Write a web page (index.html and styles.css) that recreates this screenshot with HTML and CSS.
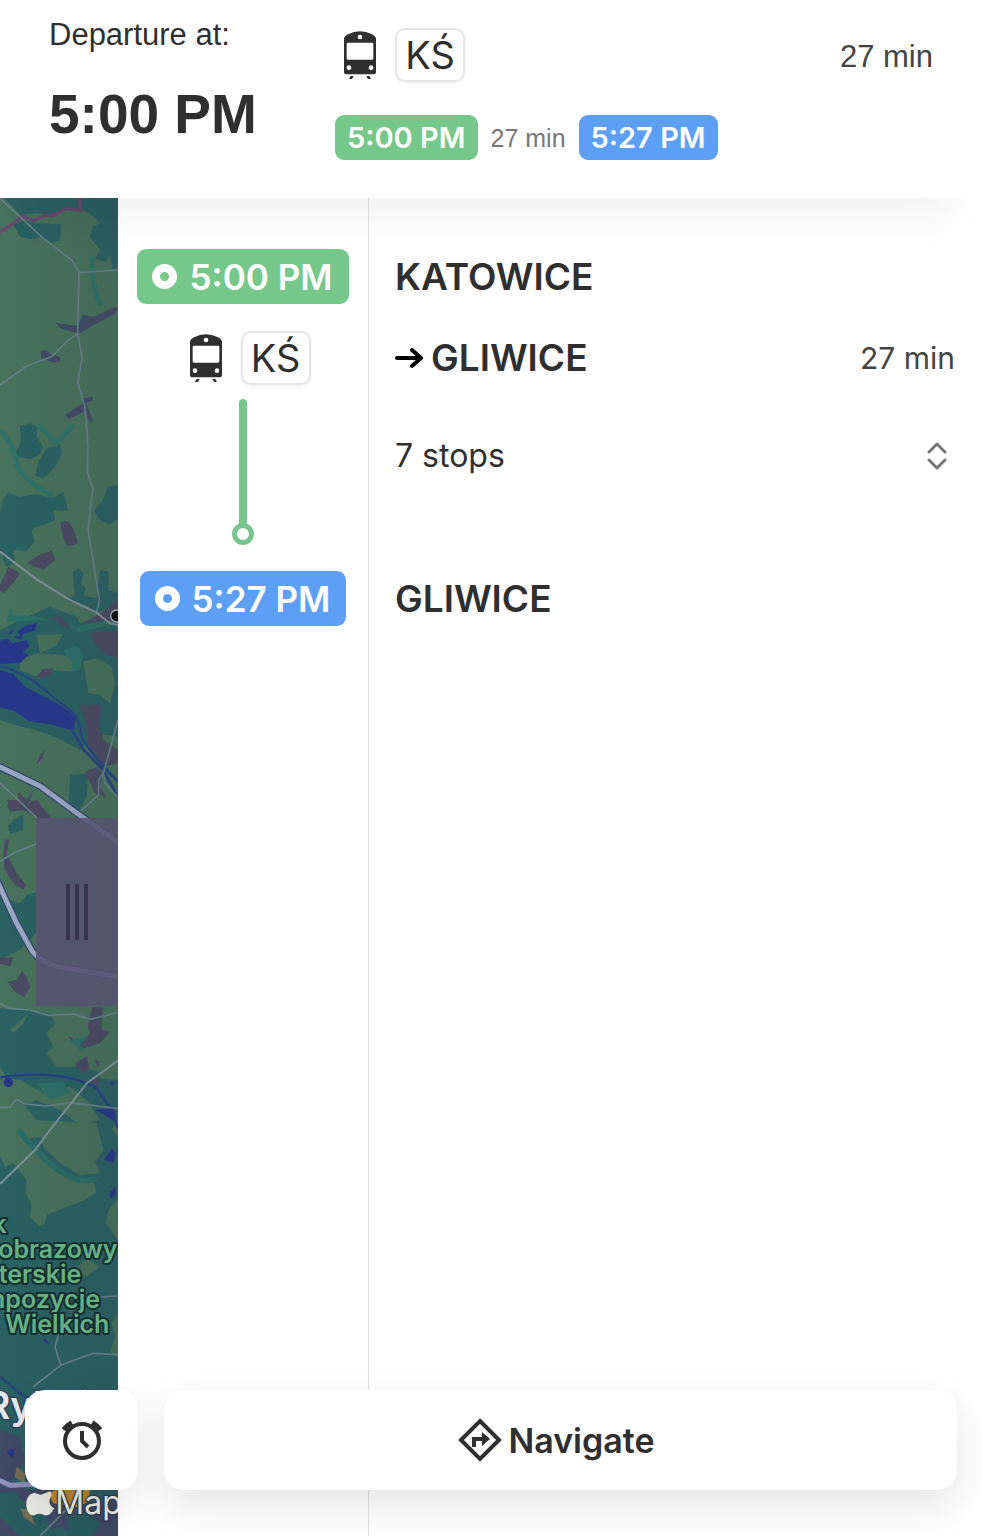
FILE: index.html
```html
<!DOCTYPE html>
<html lang="en">
<head>
    <meta charset="utf-8">
    <meta name="viewport" content="width=device-width, initial-scale=1">
    <title>Katowice - Gliwice</title>
    <link rel="stylesheet" href="styles.css">
</head>
<body>
    <!-- shared icons -->
    <svg class="sprite" aria-hidden="true">
        <symbol id="train" viewBox="0 0 96 144">
            <path fill-rule="evenodd" d="M0 22Q2 14 12 10Q48 -9 84 10Q94 14 96 22V122Q96 130 88 130H8Q0 130 0 122ZM12 35Q8 35 8 39V82Q8 86 12 86H84Q88 86 88 82V39Q88 35 84 35ZM48 11A7 7 0 1 0 48 25A7 7 0 1 0 48 11ZM15 103A7 7 0 1 0 15 117A7 7 0 1 0 15 103ZM81 103A7 7 0 1 0 81 117A7 7 0 1 0 81 103Z"/>
            <path d="M20 135H29L24 144H15ZM67 135H76L81 144H72Z"/>
        </symbol>
    </svg>

    <header class="header">
        <div class="departure">
            <div class="departure-label">Departure at:</div>
            <div class="departure-time">5:00 PM</div>
        </div>
        <div class="route">
            <div class="vehicle">
                <svg class="train"><use href="#train"/></svg>
                <span class="line-badge">KŚ</span>
            </div>
            <div class="route-times">
                <span class="pill green">5:00 PM</span>
                <span class="route-min">27 min</span>
                <span class="pill blue">5:27 PM</span>
            </div>
        </div>
        <div class="total">27 min</div>
    </header>

    <main class="content">
        <div class="map">
            <svg class="map-canvas" viewBox="0 594 354 4014" preserveAspectRatio="xMinYMin slice">
                <defs>
                    <linearGradient id="shade" x1="0" x2="1" y1="0" y2="0">
                        <stop offset="0" stop-color="#2b3340" stop-opacity="0"/>
                        <stop offset="1" stop-color="#2b3340" stop-opacity=".14"/>
                    </linearGradient>
                </defs>
                <rect y="594" width="354" height="4014" fill="#47725b"/>

                <!-- north -->
                <g transform="translate(0 570)">
                    <g fill="#2a6163">
                        <path d="M10 24H354V232L338 238L330 195L318 215L285 208L300 180L270 140L278 110L300 100L270 70L240 60L200 50L150 75L110 70L60 75L40 50Z"/>
                        <path d="M40 105L70 90L110 100L184 103L180 150L155 160L125 140L95 148L60 140Z"/>
                        <path d="M60 708L90 700L112 712L110 740L130 770L118 795L90 808L55 802L48 785L62 755Z"/>
                        <path d="M140 775L180 762L186 790L165 830L130 866L106 855L115 815Z"/>
                        <path d="M8 930L24 908L60 920L110 912L160 925L190 905L205 962L160 960L165 990L130 1005L60 1025H0V968Z"/>
                        <path d="M354 885L325 890L305 935L282 962L300 990L330 1005L354 985Z"/>
                    </g>
                    <g fill="none" stroke="#2f7268" stroke-width="14">
                        <path d="M0 722Q40 760 55 835Q90 890 160 915"/>
                        <path d="M115 705L170 760L220 705"/>
                        <path d="M276 200Q275 290 302 345"/>
                    </g>
                    <g fill="#414b66">
                        <path d="M168 398L232 408L250 374L280 380L345 352L354 355L345 372L290 400L240 430L215 425L180 414Z"/>
                        <path d="M122 482L140 480L150 492L178 500L182 514L160 518L124 504Z"/>
                        <path d="M196 674L248 640L252 625L278 620L278 632L258 640L280 694L270 698L255 664L205 688Z"/>
                        <path d="M180 998L200 994L218 1020L232 1060L200 1068L190 1040Z"/>
                    </g>
                    <path d="M0 126L40 100L68 78L100 92L134 76L160 76L200 54L240 62V24" fill="none" stroke="#69476f" stroke-width="10"/>
                </g>

                <!-- lakes -->
                <g transform="translate(0 1560)">
                    <g fill="#2a6163">
                        <path d="M0 0H115L95 35L105 65L80 92L40 90L45 125L20 140L0 95Z"/>
                        <path d="M218 155L235 145L250 160L245 195L258 205L250 228L290 235L300 150L325 155V210L354 220V250L290 280L240 270L200 240L225 225Z"/>
                        <path d="M0 330L60 300L150 260L230 290L354 310V650L290 640L240 690L120 640L0 600Z"/>
                        <path d="M210 765L265 760L260 830L240 870H205Z"/>
                        <path d="M40 900L70 882V930H24Z"/>
                    </g>
                    <g fill="#2c7068">
                        <path d="M30 262L40 285L110 290L230 320L354 290V310L240 335L150 300L20 305Z"/>
                        <path d="M190 390L230 376L250 400L240 450L215 455Z"/>
                    </g>
                    <g fill="#47725b">
                        <path d="M60 420L110 400L190 405L218 425L215 455L150 450L110 470L60 450Z"/>
                        <path d="M110 345L188 342L170 375L120 400Z"/>
                        <path d="M250 425L290 415L335 440L345 490L330 550L300 525L265 520Z"/>
                        <path d="M0 610Q120 620 240 690L262 750L210 765L205 868L130 840L0 720Z"/>
                        <path d="M205 245L260 255L290 290L240 310Z"/>
                    </g>
                    <g fill="#4a4b63">
                        <path d="M182 10L205 5L222 30L234 68L208 78L195 50Z"/>
                        <path d="M80 130L110 108L155 92L165 120L130 150Z"/>
                        <path d="M0 195L25 140L60 160L35 195L10 220L0 210Z"/>
                        <path d="M155 292L185 290L215 328L190 318Z"/>
                        <path d="M250 310L320 268L354 235V300Z"/>
                        <path d="M272 338L354 332V415L320 405L290 380Z"/>
                        <path d="M108 470L130 446L160 444L150 465L125 475Z"/>
                        <path d="M238 556L306 555L298 610L310 660L354 690V730L310 740L265 690L258 610Z"/>
                        <path d="M108 732L122 702L134 692L128 715Z"/>
                        <path d="M255 755L290 742L308 760L300 800L320 835L285 820Z"/>
                        <path d="M20 855L50 845L58 815L78 840L100 810L85 850L110 840L155 895L120 900L70 870L30 875Z"/>
                    </g>
                    <g fill="#26378b">
                        <path d="M0 362L25 355L35 370L80 360L88 380L68 395L85 405L60 430L0 432Z"/>
                        <path d="M52 335L75 318L112 308L104 332L62 345ZM24 340L40 328L36 342ZM40 352L70 345L62 358Z"/>
                        <path d="M0 450L40 462L75 500L130 528L190 560L228 590L220 632L150 612L90 605L40 572L0 562Z"/>
                    </g>
                    <g fill="none">
                        <path d="M0 436Q60 455 110 490Q170 540 215 575Q240 600 245 650Q270 700 354 785" stroke="#22577b" stroke-width="9"/>
                        <path d="M0 436Q60 455 110 490Q170 540 215 575Q240 600 245 650Q270 700 354 785" stroke="#2b3f86" stroke-width="4"/>
                        <path d="M218 632L250 688L310 750L354 832" stroke="#254480" stroke-width="8"/>
                    </g>
                </g>

                <!-- around the handle -->
                <g transform="translate(0 2400)">
                    <g fill="#2a6163">
                        <path d="M24 75L70 58L66 90L30 104Z"/>
                        <path d="M0 290L60 310L80 285L108 276V400L60 450L0 480Z"/>
                        <path d="M0 625L70 630L150 640L172 665L140 700L160 740L140 760L170 800L240 800L354 830V950L320 1020H170L110 960L60 900L0 800Z"/>
                    </g>
                    <g fill="#47725b">
                        <path d="M150 640L260 625L262 720L200 740L145 715L165 670Z"/>
                        <path d="M28 690L85 640L70 670L40 698Z"/>
                        <path d="M0 835L60 840L130 880L210 860L260 900L300 960L240 975L180 930L110 900L50 920L0 900Z"/>
                        <path d="M290 780L354 750V840L300 835Z"/>
                    </g>
                    <g fill="#2c7068">
                        <path d="M210 720L280 705L300 690L285 735L240 750Z"/>
                        <path d="M110 850L190 845L210 880L150 900Z"/>
                    </g>
                    <g fill="#4a4b63">
                        <path d="M20 0H70L60 30L30 25ZM90 0L150 50L120 55L95 30Z"/>
                        <path d="M14 120L28 118L20 160L50 220L78 255L70 268L45 255L14 210L10 170Z"/>
                        <path d="M22 545L50 540L66 514L78 530L92 560L72 592L45 575Z"/>
                        <path d="M276 622H308L304 690L330 695L300 730L250 745L240 735L270 700L264 680Z"/>
                        <path d="M226 790L260 768L268 800L255 818L232 806Z"/>
                        <path d="M0 475L40 472L32 498L0 492ZM204 710L220 712L214 722ZM284 778L300 785L292 804ZM262 840L300 838L290 862Z"/>
                    </g>
                    <g fill="none" stroke="#243f85" stroke-width="7">
                        <path d="M0 832Q120 816 200 832Q260 845 290 865Q320 910 335 930L354 985"/>
                    </g>
                    <circle cx="25" cy="847" r="14" fill="#26378b"/>
                    <path d="M285 930L340 925L350 950L344 965L320 948Z" fill="#26378b"/>
                    <path d="M328 845L345 846L336 858Z" fill="#26378b"/>
                </g>

                <!-- landscape park -->
                <g transform="translate(0 3390)">
                    <path d="M0 40L60 30L330 -10L354 20V1218H0Z" fill="#2a6163"/>
                    <g fill="#47725b">
                        <path d="M0 0H60L100 40L180 120L230 150L280 155L290 185L255 210L190 235L140 255L135 280L118 288L90 262L95 225L78 190L80 150L40 100L15 110L0 80Z"/>
                        <path d="M110 -30L290 -20L310 60L285 95L300 130L240 135L180 100L130 50Z"/>
                        <path d="M354 205L325 240L318 280L354 330Z"/>
                        <path d="M220 420L260 385L300 410L260 440Z"/>
                        <path d="M354 550L335 580L345 620L330 665L354 680Z"/>
                    </g>
                    <path d="M55 0Q130 95 190 130T290 145" fill="none" stroke="#2a6c66" stroke-width="16"/>
                    <path d="M312 90L335 55L348 70L340 98ZM328 190L345 170L348 192L332 208ZM128 628L140 630L150 642L134 638Z" fill="#26378b"/>
                </g>

                <!-- south -->
                <g transform="translate(0 4110)">
                    <path d="M0 180L60 200L75 270L40 330L80 360L200 355L280 400L354 380V498H230L180 470L100 498H0Z" fill="#414a66"/>
                    <path d="M0 370L40 365L75 400L130 430L170 498H60L0 440ZM200 440L260 430L300 460L280 498H210Z" fill="#285e60"/>
                    <path d="M50 290L74 310V340L44 320ZM62 415L90 420L105 465L70 440Z" fill="#776f57"/>
                    <path d="M145 370L175 358L270 358L265 395L230 412L160 400Z" fill="#c28c26"/>
                    <path d="M20 245L38 236L46 250L34 262Z" fill="#26378b"/>
                    <path d="M0 20L60 70L110 100" fill="none" stroke="#264a78" stroke-width="9"/>
                </g>

                <!-- roads -->
                <g fill="none" stroke="#67808a" stroke-width="5" stroke-linejoin="round">
                    <path d="M0 596L60 650L130 715L215 780L237 818L354 810"/>
                    <path d="M237 818L233 1000L246 1075L233 1148L255 1220L264 1340L262 1415L278 1465L264 1590L282 1700L298 1800L290 1838"/>
                    <path d="M0 1155L80 1098L155 1070L200 1025L233 1000"/>
                    <path d="M0 2350L55 2400L115 2458"/>
                    <path d="M354 2160L310 2320L296 2340V2385L240 2435"/>
                    <path d="M310 2320L315 2350L354 2392"/>
                    <path d="M0 2584L40 2560L108 2532"/>
                    <path d="M0 3010L25 3025L90 3030L145 3046L220 3042L270 3058L354 3038"/>
                    <path d="M0 3322H28L50 3298L75 3312L140 3318L210 3308L354 3326"/>
                    <path d="M290 3892L354 3888"/>
                    <path d="M180 3990L165 4040L182 4096L100 4160"/>
                    <path d="M182 4096L280 4060L354 4064"/>
                    <path d="M120 4608L220 4508"/>
                </g>
                <path d="M0 1655L110 1738L210 1800L290 1838L330 1870L354 1875" fill="none" stroke="#7f9099" stroke-width="6"/>
                <path d="M354 3182L262 3248L205 3320L150 3390L105 3450L0 3552" fill="none" stroke="#7c9398" stroke-width="6"/>
                <g fill="none" stroke-linejoin="round">
                    <path d="M-10 2296L40 2320L120 2358L262 2462L354 2528" stroke="#35436a" stroke-width="22"/>
                    <path d="M-10 2296L40 2320L120 2358L262 2462L354 2528" stroke="#9aa8c4" stroke-width="15"/>
                    <path d="M-10 2640L50 2770L98 2856Q120 2884 180 2902L354 2930" stroke="#35436a" stroke-width="22"/>
                    <path d="M-10 2640L50 2770L98 2856Q120 2884 180 2902L354 2930" stroke="#9aa8c4" stroke-width="15"/>
                    <path d="M-10 4438L30 4456L120 4452" stroke="#8f93bd" stroke-width="15"/>
                </g>
                <circle cx="350" cy="1848" r="18" fill="#0c0f12" stroke="#b5bcc0" stroke-width="4"/>
                <rect y="594" width="354" height="4014" fill="url(#shade)"/>

                <g class="place-park" text-anchor="end">
                    <text x="20" y="3698">k</text>
                    <text x="352" y="3773">obrazowy</text>
                    <text x="244" y="3850">terskie</text>
                    <text x="300" y="3925">mpozycje</text>
                    <text x="328" y="4000">Wielkich</text>
                </g>
                <text class="place-city" x="334" y="4256" text-anchor="end">Rybnik</text>

                <!-- attribution -->
                <path fill="#e9e9e4" d="M140 4478C146 4474 151 4473 153 4476C155 4482 150 4489 157 4482C152 4492 146 4497 150 4513C153 4520 159 4523 162 4525C157 4538 148 4546 139 4546C130 4546 127 4541 118 4541C109 4541 106 4546 98 4546C86 4545 78 4527 79 4509C80 4490 92 4478 105 4479C112 4480 116 4484 121 4484C127 4484 132 4480 140 4478Z"/>
                <text class="attribution" x="166" y="4543">Maps</text>
            </svg>
            <button class="handle" aria-label="Resize map">
                <span class="grip"></span>
                <span class="grip"></span>
                <span class="grip"></span>
            </button>
        </div>

        <section class="timeline">
            <span class="pill pill-big green"><span class="ring"></span>5:00 PM</span>
            <div class="vehicle">
                <svg class="train"><use href="#train"/></svg>
                <span class="line-badge">KŚ</span>
            </div>
            <div class="track">
                <div class="track-line"></div>
                <div class="track-end"></div>
            </div>
            <span class="pill pill-big blue"><span class="ring"></span>5:27 PM</span>
        </section>

        <section class="details">
            <h2 class="station">KATOWICE</h2>
            <div class="direction">
                <svg class="arrow" viewBox="0 0 28 24">
                    <path d="M2 12H26M17 4L26 12L17 20"/>
                </svg>
                <h2 class="station">GLIWICE</h2>
                <span class="leg-min">27 min</span>
            </div>
            <button class="stops">
                7 stops
                <svg class="chevrons" viewBox="0 0 20 28">
                    <path d="M2 10L10 2L18 10M2 18L10 26L18 18"/>
                </svg>
            </button>
            <h2 class="station">GLIWICE</h2>
        </section>

        <footer class="actions">
            <button class="action alarm" aria-label="Set alarm">
                <svg class="alarm-icon" viewBox="0 0 42 42">
                    <circle cx="21" cy="22" r="17"/>
                    <path d="M21 12V22L27 28"/>
                    <path class="bell" d="M3 11Q6 7 11 4M31 4Q36 7 39 11"/>
                </svg>
            </button>
            <button class="action navigate">
                <svg class="turn-icon" viewBox="0 0 44 44">
                    <path class="sign" d="M22 3L41 22L22 41L3 22Z"/>
                    <path class="turn" d="M16 29V21H25"/>
                    <path d="M24 14L32 21L24 28Z"/>
                </svg>
                Navigate
            </button>
        </footer>
    </main>
</body>
</html>
```
FILE: styles.css
```css
* {
    box-sizing: border-box;
}
body {
    margin: 0;
    min-height: 100vh;
    display: flex;
    flex-direction: column;
    font-family: Inter, "Noto Sans", sans-serif;
    color: #2f2f2f;
    background: #fff;
}
button {
    font: inherit;
    color: inherit;
    border: none;
    padding: 0;
    cursor: pointer;
}
.sprite {
    position: absolute;
    width: 0;
    height: 0;
}

/* header */
.header {
    position: relative;
    z-index: 2;
    display: flex;
    padding: 15px 49px 38px;
    background: #fff;
    box-shadow: 0 50px 40px -30px rgba(0, 0, 0, 0.05);
    font-family: "Liberation Sans", Arial, sans-serif;
}
.departure {
    width: 286px;
}
.departure-label {
    font-size: 31px;
    line-height: 40px;
}
.departure-time {
    margin-top: 27px;
    font-size: 55px;
    font-weight: bold;
    line-height: 64px;
}
.route {
    flex: 1;
    padding-top: 13px;
}
.vehicle {
    display: flex;
    align-items: center;
    gap: 19px;
    height: 54px;
    padding-left: 9px;
}
.train {
    width: 32px;
    height: 48px;
    fill: #2f2f2f;
}
.line-badge {
    display: flex;
    align-items: center;
    justify-content: center;
    width: 70px;
    height: 54px;
    border: 2px solid #e6e6e6;
    border-radius: 10px;
    box-shadow: 0 1px 3px rgba(0, 0, 0, 0.08);
    font-family: Inter, "Noto Sans", sans-serif;
    font-size: 38px;
    line-height: 48px;
}
.route-times {
    display: flex;
    align-items: center;
    gap: 13px;
    margin-top: 33px;
}
.pill {
    display: flex;
    align-items: center;
    height: 45px;
    padding: 0 12px;
    border-radius: 9px;
    color: #fff;
    font-family: Inter, "Noto Sans", sans-serif;
    font-size: 29px;
    font-weight: 600;
    white-space: nowrap;
}
.green {
    background: #75c88a;
}
.blue {
    background: #5e9ff6;
}
.route-min {
    font-size: 25px;
    line-height: 32px;
    color: #777;
}
.total {
    padding-top: 24px;
    font-size: 31px;
    line-height: 36px;
    color: #444;
}

/* map */
.content {
    position: relative;
    flex: 1;
    display: grid;
    grid-template-columns: 118px 251px 1fr;
}
.map {
    position: relative;
    overflow: hidden;
    background: #2a6163;
}
.map-canvas {
    position: absolute;
    inset: 0;
    width: 100%;
    height: 100%;
}
.place-park {
    font-size: 75px;
    font-weight: 600;
    fill: #68b084;
    stroke: #12302f;
    stroke-width: 12px;
    stroke-linejoin: round;
    paint-order: stroke;
}
.place-city {
    font-size: 114px;
    font-weight: 600;
    fill: #e6e9ee;
    stroke: #343f5c;
    stroke-width: 8px;
    paint-order: stroke;
}
.attribution {
    font-size: 96px;
    fill: #e9e9e4;
    stroke: #333a48;
    stroke-width: 8px;
    paint-order: stroke;
}
.handle {
    position: absolute;
    top: 620px;
    right: 0;
    display: flex;
    align-items: center;
    justify-content: center;
    gap: 5px;
    width: 82px;
    height: 188px;
    background: rgba(87, 83, 112, 0.88);
}
.grip {
    width: 4px;
    height: 56px;
    background: #383450;
}

/* itinerary */
.timeline {
    display: flex;
    flex-direction: column;
    align-items: center;
    padding-top: 51px;
    border-right: 1px solid #e0e0e0;
}
.pill-big {
    gap: 12px;
    height: 55px;
    padding: 0 16px 0 15px;
    font-size: 35px;
}
.ring {
    width: 25px;
    height: 25px;
    border: 8px solid #fff;
    border-radius: 50%;
}
.timeline .vehicle {
    margin-top: 27px;
    padding-left: 14px;
}
.track {
    display: flex;
    flex-direction: column;
    align-items: center;
    margin: 14px 0 26px;
}
.track-line {
    width: 8px;
    height: 125px;
    border-radius: 4px 4px 0 0;
    background: #7ac58f;
}
.track-end {
    width: 22px;
    height: 22px;
    margin-top: -1px;
    border: 5px solid #7ac58f;
    border-radius: 50%;
}
.details {
    padding: 51px 27px 0 26px;
}
.station {
    margin: 0;
    font-size: 37px;
    font-weight: 600;
    line-height: 55px;
}
.direction {
    display: flex;
    align-items: center;
    gap: 8px;
    margin-top: 26px;
}
.arrow {
    width: 28px;
    height: 24px;
    fill: none;
    stroke: #000;
    stroke-width: 4;
    stroke-linecap: round;
    stroke-linejoin: round;
}
.leg-min {
    margin-left: auto;
    font-size: 30px;
    color: #444;
}
.stops {
    display: flex;
    align-items: center;
    justify-content: space-between;
    width: 100%;
    height: 55px;
    margin: 43px 0 88px;
    padding-right: 8px;
    background: none;
    font-size: 32px;
}
.chevrons {
    width: 20px;
    height: 28px;
    fill: none;
    stroke: #777;
    stroke-width: 3;
    stroke-linecap: round;
    stroke-linejoin: round;
}

/* bottom buttons */
.actions {
    position: absolute;
    left: 25px;
    right: 25px;
    bottom: 46px;
    display: flex;
    gap: 26px;
}
.action {
    display: flex;
    align-items: center;
    justify-content: center;
    gap: 6px;
    height: 100px;
    border-radius: 20px;
    background: #fff;
    box-shadow: 0 16px 40px rgba(0, 0, 0, 0.1);
}
.alarm {
    width: 113px;
}
.navigate {
    flex: 1;
    padding-right: 8px;
    font-size: 34px;
    font-weight: 600;
}
.alarm-icon {
    width: 42px;
    height: 42px;
    fill: none;
    stroke: #2f2f2f;
    stroke-width: 4;
}
.bell {
    stroke-width: 6;
}
.turn-icon {
    width: 44px;
    height: 44px;
    fill: #2f2f2f;
}
.sign,
.turn {
    fill: none;
    stroke: #2f2f2f;
    stroke-width: 4;
}
```
